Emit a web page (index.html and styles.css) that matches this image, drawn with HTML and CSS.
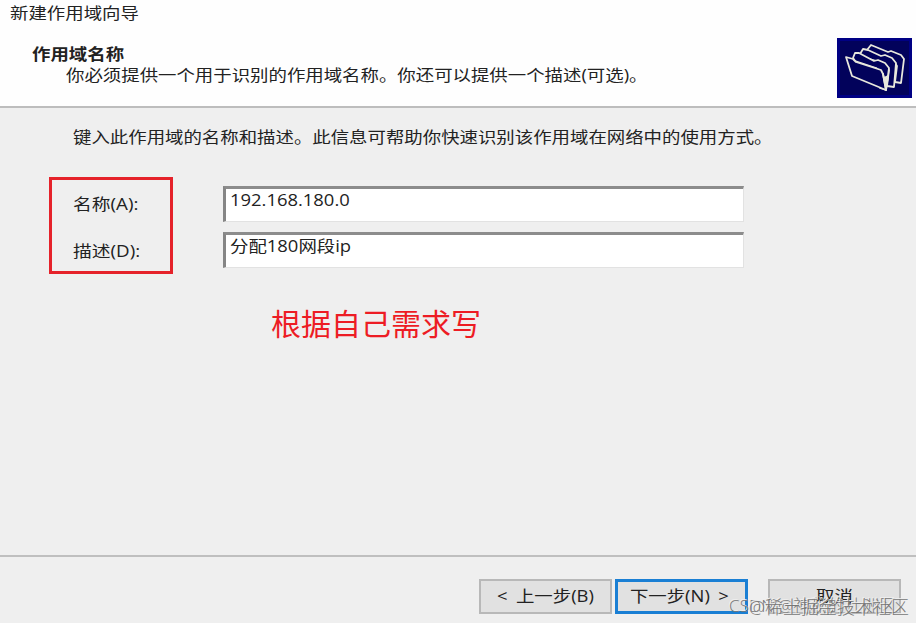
FILE: index.html
```html
<!DOCTYPE html>
<html lang="zh-CN">
<head>
<meta charset="utf-8">
<title>新建作用域向导</title>
<link rel="stylesheet" href="styles.css">
</head>
<body>
<main class="wizard">
  <header class="head">
    <div class="heading">
      <div class="caption t">新建作用域向导</div>
      <h1 class="title t">作用域名称</h1>
      <p class="sub t">你必须提供一个用于识别的作用域名称。你还可以提供一个描述(可选)。</p>
    </div>
    <svg class="folders" viewBox="0 0 75 60" width="75" height="60">
      <rect width="75" height="60" fill="#000084"/>
      <rect x="3" y="3" width="69" height="54" fill="#02025b"/>
      <g fill="#02025b" stroke="#e8e8dc" stroke-width="1.8" stroke-linejoin="round">
        <path d="M30 12L34 7L51 14L54 13L64 17L67 21L64 45L58 44L60 28L56 22L33 15Z"/>
        <path d="M23 16L26 11L31 12L44 18L48 17L55 20L59 25L57 49L50 48L52 32L47 25L25 19Z"/>
        <path d="M16 20L18 15L22 15L37 23L41 22L48 25L52 30L49 52L43 50L45 35L39 30L18 23Z"/>
        <path d="M9 19L16 21L19 24L44 32L46 36L49 52L15 38Z"/>
        <path d="M46 36L47 40L51 38L49 52Z" fill="#e8e8dc"/>
      </g>
    </svg>
  </header>
  <section class="body">
    <p class="intro t">键入此作用域的名称和描述。此信息可帮助你快速识别该作用域在网络中的使用方式。</p>
    <div class="form">
      <div class="labels">
        <label for="name"><span class="t wide">名称(A):</span></label>
        <label for="desc"><span class="t wide">描述(D):</span></label>
      </div>
      <div class="fields">
        <div class="field" id="name"><span class="t">192.168.180.0</span></div>
        <div class="field" id="desc"><span class="t">分配180网段ip</span></div>
      </div>
    </div>
    <p class="note">根据自己需求写</p>
  </section>
  <footer class="foot">
    <button class="btn"><span class="t">&lt; 上一步(B)</span></button>
    <button class="btn next"><span class="t">下一步(N) &gt;</span></button>
    <button class="btn cancel"><span class="t">取消</span></button>
    <div class="mark mark-a">CSDN @神秘的杜洲区</div>
    <div class="mark mark-b">@稀土掘金技术社区</div>
  </footer>
</main>
</body>
</html>
```
FILE: styles.css
```css
* { box-sizing: border-box; }
body { margin: 0; background: #efefef; color: #222; font-family: "Open Sans", "Noto Sans CJK SC", sans-serif; }
h1, p { margin: 0; }
.wizard { width: 916px; height: 623px; display: flex; flex-direction: column; overflow: hidden; }
.t { display: block; width: max-content; font-size: 15.4px; line-height: 20px; white-space: pre; transform: scaleX(1.196); transform-origin: 0 50%; }
.t.wide { transform: scaleX(1.22); }
.head { height: 108px; background: #fefefe; border-bottom: 2px solid #bdbdbd; display: flex; justify-content: space-between; padding-right: 4px; }
.caption { margin: 4px 0 0 10px; }
.title { margin: 21px 0 0 32px; font-weight: 700; }
.sub { margin: 1px 0 0 66px; }
.folders { margin-top: 38px; flex: none; }
.body { height: 447px; padding-top: 20px; }
.intro { margin-left: 73px; }
.form { display: flex; margin: 29px 0 0 49px; }
.labels { width: 124px; height: 97px; border: 3px solid #e5222a; padding: 15px 0 0 21px; display: flex; flex-direction: column; gap: 27px; }
.fields { margin: 9px 0 0 50px; display: flex; flex-direction: column; gap: 10px; }
.field { width: 521px; height: 36px; background: #fff; border: 1px solid #e2e2e2; border-top: 3px solid #8c8c8c; border-left: 3px solid #858585; padding: 2px 0 0 4px; }
.note { margin: 27px 0 0 271px; color: #ed1c24; font-size: 30px; line-height: 46px; }
.foot { position: relative; height: 68px; border-top: 2px solid #bfbfbf; padding: 22px 15px 0 479px; display: flex; align-items: flex-start; }
.btn { width: 133px; height: 35px; padding: 0; border: 2px solid #b8b8b8; background: #e1e1e1; color: #222; font-family: inherit; display: flex; justify-content: center; align-items: center; }
.btn .t { transform-origin: 50% 50%; word-spacing: 3px; }
.next { margin-left: 3px; border: 3px solid #1a7fd4; }
.next .t { margin-right: 4px; }
.cancel { margin-left: 20px; }
.mark { position: absolute; white-space: pre; color: #777; text-shadow: -1px -1px 0 #f0f0f0; line-height: 24px; font-weight: 300; }
.mark-a { left: 729px; top: 37px; font-size: 17.2px; }
.mark-b { left: 749px; top: 38px; font-size: 18px; }
```
